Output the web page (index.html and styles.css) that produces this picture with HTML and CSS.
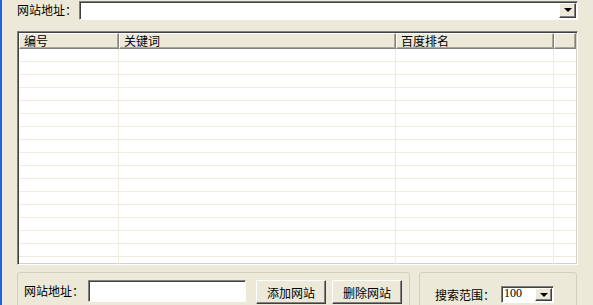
FILE: index.html
```html
<!DOCTYPE html>
<html lang="zh-CN">

<head>
    <meta charset="UTF-8">
    <title>百度排名查询</title>
    <link rel="stylesheet" href="styles.css">
</head>

<body>
    <div class="window">
        <div class="top-row">
            <span class="label">网站地址<span class="colon">：</span></span>
            <div class="combo wide">
                <span class="combo-text"></span>
                <span class="drop-btn"><span class="arrow"></span></span>
            </div>
        </div>

        <div class="listview">
            <div class="lv-header">
                <div class="col c1">编号</div>
                <div class="col c2">关键词</div>
                <div class="col c3">百度排名</div>
                <div class="col c4"></div>
            </div>
            <div class="lv-body" id="rows"></div>
        </div>

        <div class="bottom">
            <div class="group g1">
                <span class="label">网站地址<span class="colon">：</span></span>
                <div class="textbox"></div>
                <button class="btn">添加网站</button>
                <button class="btn">删除网站</button>
            </div>
            <div class="group g2">
                <span class="label">搜索范围<span class="colon">：</span></span>
                <div class="combo small">
                    <span class="combo-text">100</span>
                    <span class="drop-btn"><span class="arrow"></span></span>
                </div>
            </div>
        </div>
    </div>
<script>
    // empty grid rows
    var rows = document.getElementById("rows");
    for (var i = 0; i < 17; i++) {
        var r = document.createElement("div");
        r.className = "row";
        r.innerHTML = '<div class="cell c1"></div><div class="cell c2"></div><div class="cell c3"></div><div class="cell c4"></div>';
        rows.appendChild(r);
    }
</script>
</body>
</html>
```

FILE: styles.css
```css
body {
    margin: 0;
    padding: 0;
    font-family: "Noto Sans CJK SC", "Liberation Sans", sans-serif;
    font-size: 12px;
    color: #000;
    background-color: #ece9d8;
}

.window {
    width: 593px;
    height: 305px;
    overflow: hidden;
    box-sizing: border-box;
    border-left: 2px solid #2d62c8;
    padding-left: 15px;
    padding-right: 15px;
}

.colon {
    font-family: "Noto Sans CJK TC", sans-serif;
}

.top-row {
    display: flex;
    align-items: center;
    height: 20px;
}

.top-row .label {
    width: 62px;
    line-height: 20px;
}

.combo {
    display: flex;
    box-sizing: border-box;
    background-color: #fff;
    border-top: 1px solid #808080;
    border-left: 1px solid #808080;
    border-right: 1px solid #fff;
    border-bottom: 1px solid #fff;
    box-shadow: inset 1px 1px 0 #404040;
}

.combo.wide {
    width: 499px;
    height: 19px;
}

.combo-text {
    flex: 1;
    padding-left: 3px;
    line-height: 15px;
}

.drop-btn {
    width: 17px;
    margin: 1px 1px 1px 0;
    box-sizing: border-box;
    background-color: #ece9d8;
    border-top: 1px solid #fff;
    border-left: 1px solid #fff;
    border-right: 1px solid #404040;
    border-bottom: 1px solid #404040;
    box-shadow: inset -1px -1px 0 #808080;
    display: flex;
    align-items: center;
    justify-content: center;
}

.arrow {
    width: 0;
    height: 0;
    border-left: 4px solid transparent;
    border-right: 4px solid transparent;
    border-top: 4px solid #000;
}

.listview {
    margin-top: 11px;
    height: 234px;
    box-sizing: border-box;
    border-top: 1px solid #808080;
    border-left: 1px solid #808080;
    border-right: 1px solid #fff;
    border-bottom: 1px solid #fff;
    box-shadow: inset 1px 1px 0 #404040, inset -1px -1px 0 #d4d0c8;
    background-color: #fff;
    overflow: hidden;
    padding: 1px;
}

.lv-header {
    display: flex;
    height: 16px;
}

.lv-header .col {
    box-sizing: border-box;
    background-color: #ece9d8;
    border-top: 1px solid #fff;
    border-left: 1px solid #fff;
    border-right: 1px solid #808080;
    border-bottom: 1px solid #808080;
    box-shadow: inset -1px -1px 0 #aca899;
    padding-left: 4px;
    line-height: 13px;
}

.c1 { width: 100px; }
.c2 { width: 277px; }
.c3 { width: 158px; }
.c4 { flex: 1; }

.row {
    display: flex;
    height: 13px;
}

.cell {
    box-sizing: border-box;
    border-right: 1px solid #efecdf;
    border-bottom: 1px solid #efecdf;
}

.cell.c4 {
    border-right: none;
}

.bottom {
    display: flex;
    gap: 9px;
    margin-top: 7px;
}

.group {
    box-sizing: border-box;
    height: 40px;
    border: 1px solid #d0d0bf;
    border-radius: 3px;
    display: flex;
    align-items: flex-start;
}

.g1 {
    width: 393px;
    padding: 7px 0 0 6px;
}

.g1 .label {
    width: 64px;
    line-height: 22px;
}

.textbox {
    width: 158px;
    height: 22px;
    box-sizing: border-box;
    background-color: #fff;
    border-top: 1px solid #808080;
    border-left: 1px solid #808080;
    border-right: 1px solid #fff;
    border-bottom: 1px solid #fff;
    box-shadow: inset 1px 1px 0 #404040;
}

.btn {
    font-family: inherit;
    font-size: 12px;
    color: #000;
    height: 24px;
    width: 70px;
    padding: 0;
    margin-left: 10px;
    background-color: #ece9d8;
    border-top: 1px solid #fff;
    border-left: 1px solid #fff;
    border-right: 1px solid #404040;
    border-bottom: 1px solid #404040;
    box-shadow: inset -1px -1px 0 #808080;
}

.btn + .btn {
    margin-left: 6px;
}

.g2 {
    width: 158px;
    padding: 13px 0 0 15px;
}

.g2 .label {
    width: 66px;
    line-height: 17px;
}

.combo.small {
    width: 53px;
    height: 17px;
}

.combo.small .combo-text {
    font-family: "Liberation Serif", serif;
    line-height: 13px;
    padding-left: 2px;
}
```
